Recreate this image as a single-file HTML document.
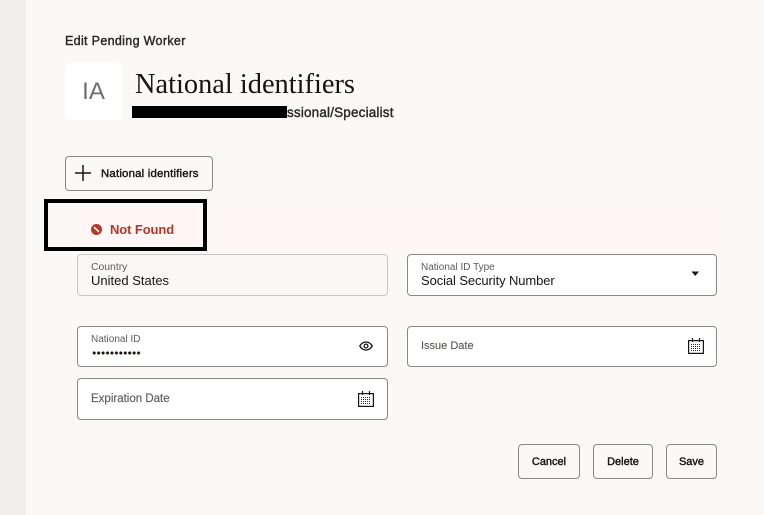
<!DOCTYPE html>
<html><head><meta charset="utf-8">
<style>
html,body{margin:0;padding:0;width:764px;height:515px;overflow:hidden;background:#fbf9f8;font-family:"Liberation Sans",sans-serif;color:#161513}
.a{position:absolute;white-space:nowrap}
.m{font-weight:normal;-webkit-text-stroke:.4px currentColor}
.box{position:absolute;box-sizing:border-box;border:1px solid #8a8785;border-radius:4px;background:#fff}
.btn{position:absolute;box-sizing:border-box;border:1px solid #8a8785;border-radius:4px;background:#fbf9f8;font-size:11px;-webkit-text-stroke:.4px #161513;text-align:center;color:#161513;height:35px;line-height:34px}
.lab{font-size:10px;color:#5f5c59;line-height:12px}
.lab2{font-size:11.5px;color:#5f5c59;line-height:14px;-webkit-text-stroke:.15px #5f5c59}
.val{font-size:13px;line-height:16px;color:#161513}
</style></head>
<body>
<div class="a" style="left:0;top:0;width:26px;height:515px;background:#f1efed"></div>

<div class="a m" style="left:65px;top:34px;font-size:12.5px;line-height:15px;color:#2a2825;letter-spacing:.33px">Edit Pending Worker</div>
<div class="a" style="left:65px;top:63px;width:57px;height:57px;background:#fff;border-radius:6px;text-align:center;line-height:57px;font-size:24px;color:#6f6c69">IA</div>
<div class="a" style="left:135px;top:68px;font-family:'Liberation Serif',serif;font-size:28.4px;line-height:34px;color:#161513">National identifiers</div>
<div class="a m" style="left:287px;top:105px;font-size:13.5px;line-height:16px;color:#2a2825;letter-spacing:.17px">ssional/Specialist</div>
<div class="a" style="left:132px;top:106px;width:155px;height:12px;background:#000"></div>

<div class="btn" style="left:65px;top:156px;width:148px;text-align:left;padding-left:35px;font-size:11.4px;letter-spacing:.2px">National identifiers</div>
<svg class="a" style="left:75px;top:165px" width="16" height="16" viewBox="0 0 16 16"><path d="M0 8H16M8 0V16" stroke="#161513" stroke-width="1.5" fill="none"/></svg>

<div class="a" style="left:77px;top:208px;width:640px;height:45px;background:#fff7f5"></div>
<div class="a" style="left:44px;top:199px;width:155px;height:44px;border:4px solid #000"></div>
<svg class="a" style="left:91px;top:224px" width="11" height="11" viewBox="0 0 11 11"><circle cx="5.5" cy="5.5" r="5.5" fill="#b5392a"/><path d="M3 3.2L8 7.8" stroke="#fff" stroke-width="1.6"/></svg>
<div class="a" style="left:110px;top:222px;font-size:13px;line-height:16px;font-weight:bold;color:#b3372a;letter-spacing:-.1px">Not Found</div>

<div class="box" style="left:77px;top:254px;width:311px;height:42px;background:#f9f8f6;border-color:#c9c6c3"></div>
<div class="a lab" style="left:91px;top:262px;font-size:10.4px">Country</div>
<div class="a val" style="left:91px;top:273px">United States</div>

<div class="box" style="left:407px;top:254px;width:310px;height:42px"></div>
<div class="a lab" style="left:421px;top:262px">National ID Type</div>
<div class="a val" style="left:421px;top:273px;letter-spacing:-.1px">Social Security Number</div>
<svg class="a" style="left:691px;top:271px" width="9" height="6" viewBox="0 0 9 6"><path d="M0.5 0.5H8L4.300 5Z" fill="#161513"/></svg>

<div class="box" style="left:77px;top:326px;width:311px;height:41px"></div>
<div class="a lab" style="left:91px;top:334px">National ID</div>
<div class="a" style="left:92px;top:350px;width:49px;height:6px;background-image:radial-gradient(circle at 2.2px 3px,#161513 1.4px,transparent 1.7px);background-size:4.45px 6px"></div>
<svg class="a" style="left:359px;top:339px" width="14" height="14" viewBox="0 0 14 14"><path d="M.8 7C2.300 4.400 4.500 3 7 3s4.700 1.400 6.200 4C11.700 9.600 9.500 11 7 11S2.300 9.600.8 7Z" fill="none" stroke="#161513" stroke-width="1.300"/><circle cx="7" cy="7" r="1.900" fill="none" stroke="#161513" stroke-width="1.300"/></svg>

<div class="box" style="left:407px;top:326px;width:310px;height:41px"></div>
<div class="a lab2" style="left:421px;top:339px;font-size:11px">Issue Date</div>
<svg class="a" style="left:688px;top:338px" width="16" height="16" viewBox="0 0 16 16"><rect x=".6" y="2.600" width="14.800" height="12.800" fill="#fff" stroke="#161513" stroke-width="1.200"/><path d="M4.500 0V4M11.500 0V4" stroke="#161513" stroke-width="1.200"/><path d="M3 6.500H13M3 8.500H13M3 10.500H13M3 12.500H13" stroke="#2b2b33" stroke-width="1" stroke-dasharray="1 1"/></svg>

<div class="box" style="left:77px;top:378px;width:311px;height:42px"></div>
<div class="a lab2" style="left:91px;top:392px">Expiration Date</div>
<svg class="a" style="left:358px;top:391px" width="16" height="16" viewBox="0 0 16 16"><rect x=".6" y="2.600" width="14.800" height="12.800" fill="#fff" stroke="#161513" stroke-width="1.200"/><path d="M4.500 0V4M11.500 0V4" stroke="#161513" stroke-width="1.200"/><path d="M3 6.500H13M3 8.500H13M3 10.500H13M3 12.500H13" stroke="#2b2b33" stroke-width="1" stroke-dasharray="1 1"/></svg>

<div class="btn" style="left:518px;top:444px;width:62px">Cancel</div>
<div class="btn" style="left:593px;top:444px;width:60px">Delete</div>
<div class="btn" style="left:666px;top:444px;width:51px">Save</div>
</body></html>
